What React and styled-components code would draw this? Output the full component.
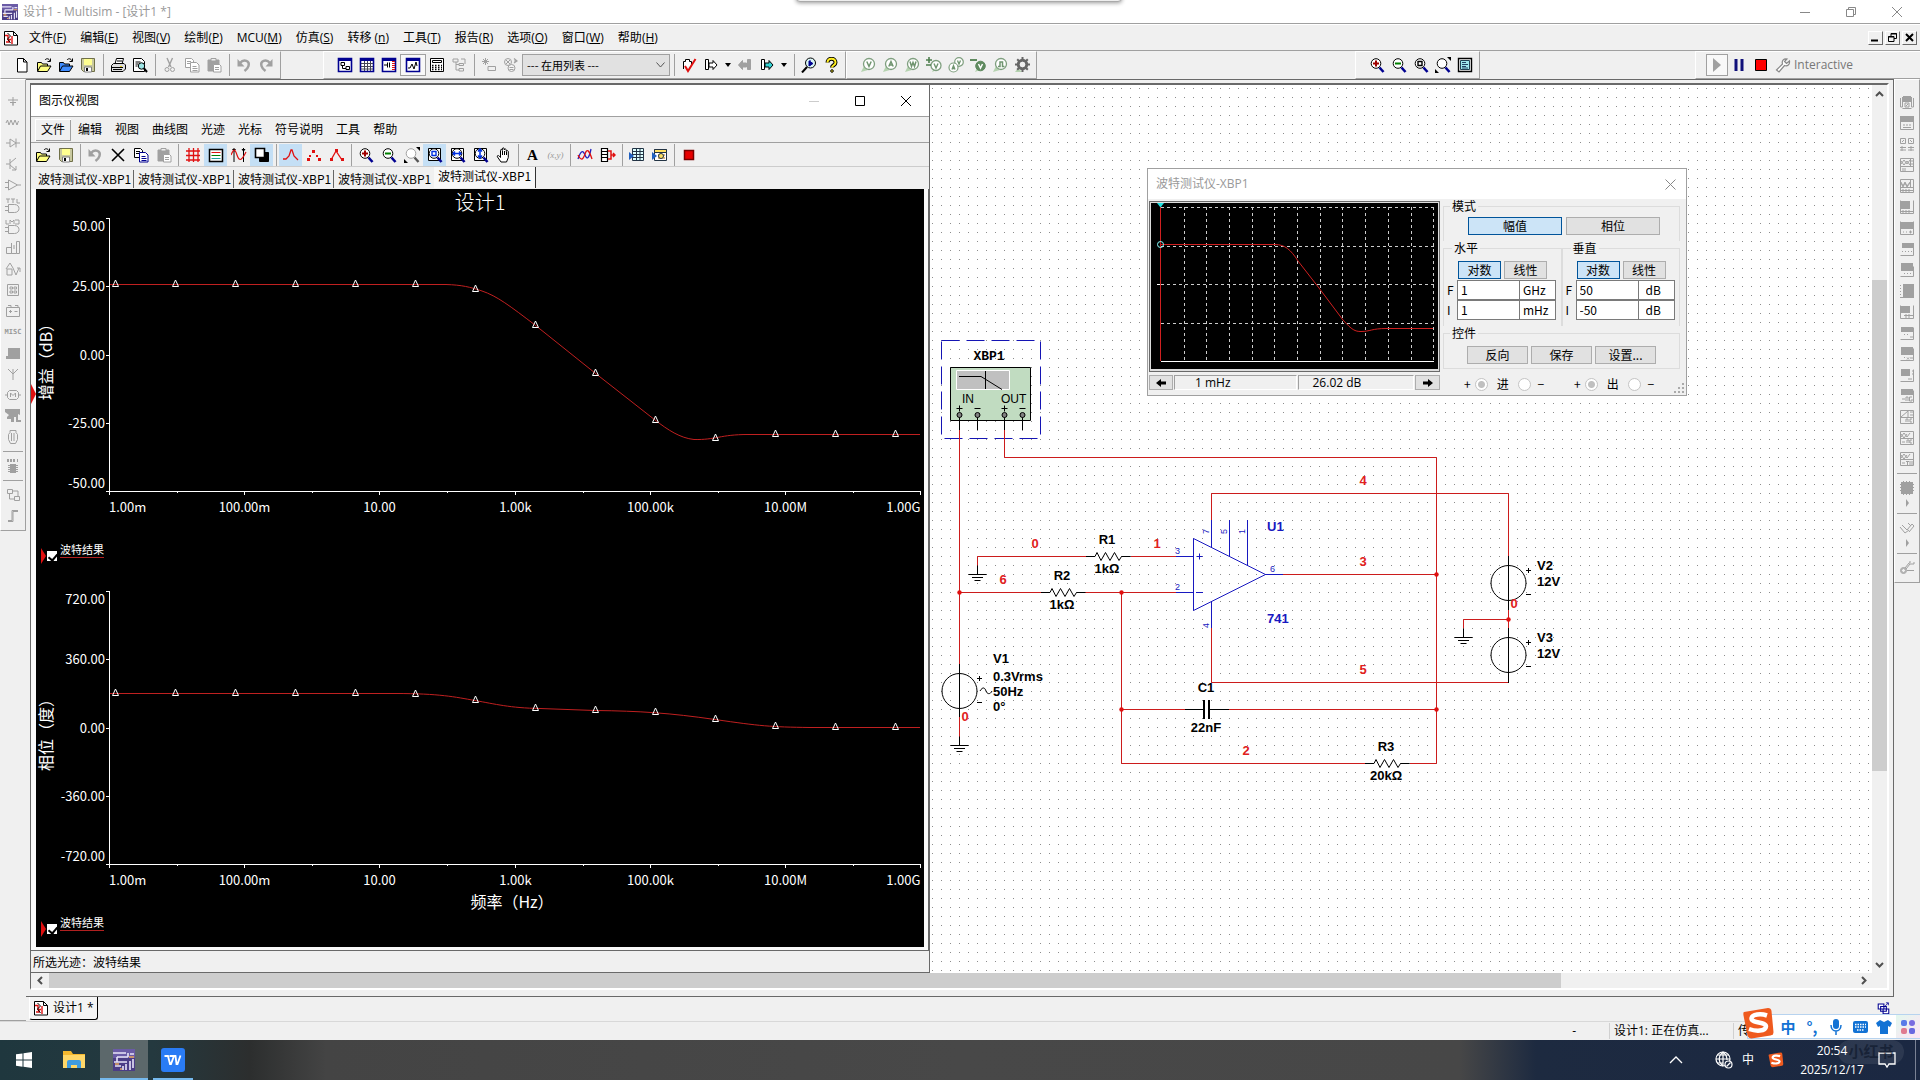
import React from "react";
import styled, { createGlobalStyle } from "styled-components";

const UI = '"Open Sans", "Noto Sans CJK SC", sans-serif';
const NARROW = '"Noto Sans CJK SC", sans-serif';
const FACE = "#f0f0f0";
const EDGE = "#a0a0a0";
const DARK = "#696969";

const Global = createGlobalStyle`
  * { box-sizing: border-box; }
  body { margin: 0; overflow: hidden; background: ${FACE}; font: 12px/16px ${UI}; color: #000; }
  button, input { font: inherit; color: inherit; }
  svg { display: block; flex: none; }
`;

/* ---------- icons: each is a list of [path, stroke, fill, strokeWidth, dash] ---------- */
const K = "#000";
const G = "#a0a0a0";
const R = "#e01010";
const N = "#000090";
const V = "#7f9f7f";
const circle = (x, y, r) => `M${x - r} ${y}a${r} ${r} 0 1 0 ${2 * r} 0a${r} ${r} 0 1 0 ${-2 * r} 0`;

const folder = (fill) => [
  ["M1.5 14V5.500h4l1 1.500h5v2", K, fill],
  ["M1.500 14.500l3-5.500h10.500l-3.500 5.500z", K, fill],
  ["M9 3c1.500-2 4-1.500 5 1M14.500 1.500v3h-3", K],
];
const copyIcon = (a, b) => [
  ["M1.500 1.500h6l2 2v7h-8z M3 4.500h4M3 6.500h4", a, "#fff"],
  ["M6.500 5.500h6l2.500 2.500v7h-8.500z M8.500 9.500h4M8.500 11.500h5M8.500 13.500h5", b, "#fff"],
];
const lens = (extra) => [
  [circle(7, 6.500, 4.800), K, "#fff"],
  ["M10.500 10.500l4 4.500", N, null, 2.600],
  ...extra,
];
const probe = (letter) => [
  ["M1 15l3-6 4 4z", null, "#b5d3b0"],
  [circle(9, 7, 5.500), V, "#fff", 1.300],
  [letter, "#6f946f", null, 1.500],
];
const framed = (extra) => [["M1.500 1.500h13v13h-13z", N, "#fff", 1.600], ["M1 3h14", N, null, 2], ...extra];

const ICONS = {
  fresh: [["M3.500 1.500h6l3.500 3.500v10h-9.500z M9.500 1.500v3.500h3.500", K, "#fff"]],
  open: folder("#ffff80"),
  openBlue: folder("#3f8cff"),
  save: [
    ["M1.500 1.500h13v13h-11l-2-2z", "#707048", "#c9c9a0"],
    ["M4 2h8v6h-8z", null, "#ffff90"],
    ["M4.500 10h7v5h-7z", "#808080", "#fff"],
    ["M6 11h2v3h-2z", null, K],
  ],
  print: [
    ["M5 7l1.500-5.500h7l-1.500 5.500z", K, "#fff"],
    ["M1.500 8.500l2-2h10.500l1.500 1.500v4l-2.500 2.500h-11.500z", K, "#ddd"],
    ["M2 10.500h11M3 12.500h9M7 4h5", K],
    ["M10 9h2v1h-2z", null, "#e8d020"],
  ],
  preview: [
    ["M1.500 1.500h8l3 3v10h-11z M3.500 5h5M3.500 7h3M3.500 9h2", K, "#fff"],
    [circle(9.500, 9, 3.200), K, "#9fe6e6"],
    ["M12 11.500l3 3.500", K, null, 2],
  ],
  cut: [["M5 1l4 9M10.500 1l-4 9", G, null, 1.400], [circle(5, 12.500, 2), G], [circle(10.500, 12.500, 2), G]],
  copyOff: copyIcon(G, G),
  copy: copyIcon(K, N),
  paste: [
    ["M2 3h11v11h-11z", G, G],
    ["M5 1.500h5v2.500h-5z", G, "#eee"],
    ["M7.500 7.500h6l1.500 1.500v6h-7.500z M9 10.500h4M9 12.500h4", G, "#fff"],
  ],
  undo: [["M4 6c4-4.500 10-2 8.500 3c-.5 2-2 3.500-4 5", G, null, 2.500], ["M1.500 2v7.500h7z", null, G]],
  redo: [["M12 6c-4-4.500-10-2-8.500 3c.5 2 2 3.500 4 5", G, null, 2.500], ["M14.500 2v7.500h-7z", null, G]],
  explorer: framed([["M4 5.500h3.500v3h-3.500zM9 9.500h3.500v3h-3.500zM5.500 8.500v3h3.500", K]]),
  sheet: framed([["M2 6.500h12M2 9.500h12M2 12h12M5.500 4v10M8.500 4v10M11.500 4v10", "#445"]]),
  netlist: framed([["M3 8h3M6.500 5.500v5M8.500 5.500v5", K], ["M11 4.500h3M11 6.500h3M11 8.500h3M11 10.500h3M11 12.500h3", R]]),
  grapher: framed([["M3 11h2l2-4 2 5 2-7 1 4", K]]),
  post: [["M1.500 1.500h13v13h-13z M3.500 3.500h9v2h-9z", K, "#fff"], ["M3 8.500h10M3 10.500h10M3 12.500h10", K, null, 1.300, "1.500 1.500"]],
  tree: [["M2 2h5v3h-5zM8 6.500h4.500v2h-4.500zM8 11.500h4.500v2.500h-4.500zM5 5v8h3M5 7.500h3M10 2h4v5", G]],
  comp: [["M4.500 1v7M1 4.500h7M2 2l5 5M7 2l-5 5M7 9.500h7.500v4h-7.500z", G]],
  db: [[circle(5, 5, 3.500), G], ["M3 3l4 4M7 3l-4 4", G], [circle(8.500, 11, 3.500), G, "#f4f4f4"], ["M11 1.500l3 2.500-3 2M14 4h-3M6.500 10.500h4M6.500 12.500h4", G, null, 1.200]],
  erc: [["M2.500 12V4.500h2v-2h4v2h2V8", K, "#fff"], ["M4 9l3 5 7.500-12", R, null, 2]],
  annot: [["M2.500 2.500v10h3v-10z", K, "#fff"], ["M6 6h4v-2.500l4 4.500-4 4.500v-2.500h-4z", K, "#fff"]],
  backOff: [["M13.500 2.500v10h-3v-10z", G, G], ["M9.500 6h-4v-2.500l-4 4.500 4 4.500v-2.500h4z", G, G]],
  fwd: [["M2.500 2.500v10h3v-10z", K, "#fff"], ["M6 6h4v-2.500l4 4.500-4 4.500v-2.500h-4z", K, "#35d0d0"]],
  find: [[circle(9.500, 6, 5), K, "#d8f4f4"], ["M6 10l-5 5.500", K, null, 2], ["M8 4l4 2.500-4 2.500zM9 3v6", N, N]],
  help: [["M4.500 5.500c0-5 8-5 8 0c0 3-3.500 2.500-3.500 5", K, null, 4], ["M4.500 5.500c0-5 8-5 8 0c0 3-3.500 2.500-3.500 5", "#ffee20", null, 2], [circle(9, 14, 1.300), K, "#ffee20"]],
  pv: probe("M6.800 4.500l2.200 5 2.200-5"),
  pa: probe("M6.800 9.500l2.200-5 2.200 5M7.500 8h3"),
  pw: probe("M6 4.500l1.500 5 1.500-4 1.500 4 1.500-5"),
  pdv: [["M6 15l2-4 3 2z", null, "#b5d3b0"], [circle(10, 8.500, 5), V, "#fff", 1.300], ["M8 6.500l2 4.500 2-4.500", "#6f946f", null, 1.400], ["M0 3h6M3 0v6M0 8h5", "#4f7f4f", null, 1.600]],
  pav: [[circle(11, 5, 4.300), V, "#fff", 1.200], [circle(5.500, 10.500, 4.500), V, "#fff", 1.200], ["M4 12.500l1.500-4 1.500 4M4.500 11.500h2M9.500 3.500l1.500 3.500 1.500-3.500", "#6f946f", null, 1.300]],
  pref: [["M5 15l2-4 3 2z", null, "#b5d3b0"], [circle(10.500, 9, 4.800), "#5f8a5f", "#5f8a5f"], ["M8.500 7l2 4 2-4", "#fff", null, 1.500], ["M0 3h7", "#5f8a5f", null, 2]],
  pdig: probe("M6 9.500h2v-4.500h2.500v4.500h2"),
  gear: [["M1 15l3-4 4 4z", null, "#b5d3b0"], [circle(8.500, 7.500, 4.200), "#666", null, 3], ["M8.500 0v3M8.500 12v3M1 7.500h3M13 7.500h3M3.200 2.200l2 2M11.800 10.800l2 2M13.800 2.200l-2 2M3.200 12.800l2-2", "#666", null, 2], [circle(8.500, 7.500, 2.200), "#eee", "#eee"]],
  zin: lens([["M4 6.500h6M7 3.500v6", "#a00000", null, 2]]),
  zout: lens([["M4 6.500h6", "#008000", null, 2]]),
  zarea: lens([["M5 4.500h4v4h-4z", K, null, 1.400]]),
  zfit: lens([["M0 12v4h4zM16 0v4l-4-4z", null, K]]),
  full: [["M1.500 1.500h13v13h-13z", K, "#fff", 1.400], ["M3.500 3.500h9v9h-9z", "#245", "#9fe8ee"], ["M5 5.500h4M5 7.500h6M5 9.500h4M5 11h6", "#246"]],
  play: [["M4 1l8 7-8 7z", null, G]],
  pause: [["M5 2v12M11 2v12", "#10107a", null, 3]],
  stop: [["M2.500 2.500h11v11h-11z", K, "#f00"]],
  stopDark: [["M3.500 3.500h9v9h-9z", "#700", "#e80000", 1.500]],
  wrench: [["M1.500 13l6-6c-1-3 1-5.500 4.500-5l-2.500 2.500 2 2 3-2.500c.5 3.500-2 5.500-5 4.500l-5.500 6.500z", "#888", "#fff", 1.200]],
  cross: [["M2 2l12 12M14 2l-12 12", K, null, 1.600]],
  grid: [["M1 4h14M1 8.500h14M1 13h14M4 1v14M8.500 1v14M13 1v14", R, null, 1.300]],
  legend: [["M1.500 2.500h13v12h-13z", K, "#fff", 1.500], ["M3.500 5.500h9", R], ["M3.500 8.500h9", "#008000"], ["M3.500 11.500h9", "#20a0a0"]],
  cursors: [["M3 1v14M12.500 1v14", K], ["M1 2h4l-2 3zM10.500 2h4l-2 3z", null, K], ["M0 8c3-7 4-6 6 0s4 7 9-3", R, null, 1.200]],
  invert: [["M5.500 5.500h9v9h-9z", K, K], ["M1.500 1.500h9v9h-9z", K, "#fff", 1.600]],
  trace: [["M0 12h3l3-3 2-6h1l2 6 4 4", R, null, 1.300]],
  dots: [["M1 11h3v3h-3zM6 3h3v3h-3zM12 11h3v3h-3zM3 8h2v2h-2zM10 8h2v2h-2z", null, R]],
  dotline: [["M2 13l5-9 6 9", R, null, 1.300], ["M1 11h3v3h-3zM6 2h3v3h-3zM12 11h3v3h-3z", null, R]],
  zrest: [[circle(7, 6.500, 4.800), G, "#fff"], ["M10.500 10.500l4 4.500", "#555", null, 2.400], ["M0 12v4h4zM16 0v4l-4-4z", null, K]],
  zsel: [["M1.500 1.500h12v12h-12z", K, "#fff"], ...lens([["M5 4.500h4v4h-4z", "#0030e0", null, 1.400]])],
  zh: [["M1.500 1.500h12v12h-12z", K, "#fff"], ...lens([["M3 6.500h8M5 4.500l-2 2 2 2M9 4.500l2 2-2 2", "#0030e0", null, 1.500]])],
  zv: [["M1.500 1.500h12v12h-12z", K, "#fff"], ...lens([["M7 2v9M5 4.500l2-2.500 2 2.500M5 8.500l2 2.500 2-2.500", "#0030e0", null, 1.500]])],
  hand: [["M5 15l-3.500-5c-.8-1.500.8-2 1.800-.8l1.200 1.300v-7c0-1.500 1.800-1.500 1.800 0v-1.500c0-1.500 2-1.500 2 0v1c0-1.300 2-1.300 2 .2v1.300c0-1.300 2-1.300 2 .2v5.800l-1.800 4.500z M6.500 4v4M8.500 4v4M10.500 5v3", K, "#fff"]],
  curves: [["M1 12c3-9 5-9 7-4s4 4 6-6", "#2020c0", null, 1.300], ["M1 8c3 6 5 5 7-1s4-4 7 5", R, null, 1.300]],
  exportLog: [["M1.500 1.500h6v13h-6zM1 4.500h7M1 7.500h7M1 10.500h7", K, "#fff", 1.200], ["M8 4h3v8h-3M11 8h4M13 6l2 2-2 2", R, null, 1.500]],
  excel: [["M3.500 1.500h11v12h-11zM3.500 4.500h11M3.500 7.500h11M3.500 10.500h11M7.500 1.500v12M11 1.500v12", "#234", "#dff"], ["M0 5l5 4-5 4z", null, "#2060c0"]],
  measure: [["M2.500 2.500h12v11h-12z", "#234", "#fff"], ["M2.500 2.500h12v3h-12z", "#234", "#ffe060"], ["M6 8h7M6 11h7", "#c07000"], ["M0 5l5 4-5 4z", null, "#2060c0"], [circle(9, 9, 2.500), "#234", "#ffe060"]],
  doc: [["M1.500 1.500h9l4 4v9.500h-13z M10.500 1.500v4h4", K, "#fff"], ["M2 5.500h3v4h3M9 6v8M3 12h3v-3", R, null, 1.400], ["M4.500 3l3 3-3 3 3 4", K]],
  cascade: [["M1.500 2.500h7v6h-7zM4.500 5.500h7v6h-7zM7.500 8.500h7v6h-7z", N, "#fff", 1.300], ["M10 5l4-4M11 1h3v3", N]],
};

const PALETTE = [
  "M8 4v8M3 7h10M5 9.500h6M8 9v4",
  "M1 9l1.500-3 1.500 5 2-5 2 5 2-5 2 5 1.500-4",
  "M1 8h4M11 8h4M5 4v8l6-4zM11 3.500v9",
  "M5 3v10M1 8h4M5 7l6-5M5 9l6 5M11 10v4h-4",
  "M3.500 3v10l9-5zM0 5.500h3.500M0 10.500h3.500M12.500 8h3.500",
  "M1 1h4M3 1v4M6 1h4M8 1v4M12 1v4h3M3.500 6.500h6c6 0 6 8 0 8h-6zM0 8.500h3.500M0 12.500h3.500",
  "M1 1v4h3M5 5v-4l2 2 2-2v4M10 1h4v4h-4M3.500 6.500h6c6 0 6 8 0 8h-6zM0 8.500h3.500M0 12.500h3.500",
  "M1.500 7.500h5v6h-5zM6.500 3v10.500h5v-12h3v12h-3M9 5v4",
  "M1 8l4-6 3 5M2 8h5v6h-5zM8 7l3 7 3-7M12 7h3v4",
  "M2.500 2.500h11v11h-11zM5 5h2.500v2h-2.500zM9 5h2.500v2h-2.500zM5 9h2.500v2h-2.500zM9 9h2.500v2h-2.500z",
  "M1.500 4.500h13v9h-13zM3 2.500h3v2M10 2.500h3v2M4 8.500h3M5.500 7v3M9.500 8.500h3",
  "",
  "F M1 14v-3h2v-8h12v11z",
  "M8 14v-7M8 8l-5-5M8 8l5-5M8 8v-5",
  "M0 8h2.500M13.500 8h2.500M4.500 3.500h7l2 2v5l-2 2h-7l-2-2v-5zM5.500 10v-4l2.500 2.500 2.500-2.500v4",
  "F M0 1h15v6l-2-1v8h-2v-5h-2v5h-3v-3h-4v-2l2-2-4-3zM12 12h4v2h-4z",
  "M5 1.500h6v2l1.500 2v5l-2 4h-5l-2-4v-5l1.500-2zM6.500 4v8M9 4v8",
];
const PALETTE_NAMES = ["Sources", "Basic", "Diodes", "Transistors", "Analog", "TTL", "CMOS", "Digital", "Mixed", "Indicators", "Power", "MISC", "Peripherals", "RF", "Electromechanical", "NI", "Connectors"];

const Glyph = ({ name, size = 16 }) => (
  <svg width={size} height={size} viewBox="0 0 16 16" aria-hidden="true">
    {ICONS[name].map(([d, stroke, fill, w, dash], i) => (
      <path key={i} d={d} stroke={stroke || "none"} fill={fill || "none"} strokeWidth={w || 1} strokeDasharray={dash} />
    ))}
  </svg>
);
const Outline = ({ d }) => {
  const solid = d.startsWith("F ");
  return (
    <svg width="16" height="16" viewBox="0 0 16 16" aria-hidden="true">
      <path d={solid ? d.slice(2) : d} fill={solid ? G : "none"} stroke={solid ? "none" : G} />
    </svg>
  );
};

/* ---------- shell ---------- */
const Shell = styled.div`
  display: flex;
  flex-direction: column;
  min-height: 100vh;
`;
const TitleBar = styled.header`
  display: flex;
  align-items: center;
  height: 24px;
  padding-left: 2px;
  background: #fff;
  border-bottom: 1px solid ${EDGE};
  color: #999;
`;
const AppTitle = styled.h1`
  flex: 1;
  margin: 0 0 0 5px;
  font: inherit;
`;
const CaptionButton = styled.button`
  display: grid;
  place-items: center;
  width: ${(p) => p.$w || 46}px;
  height: ${(p) => p.$h || 20}px;
  padding: 0;
  border: 0;
  background: none;
`;
const Capture = styled.div`
  position: absolute;
  top: -6px;
  left: 50%;
  width: 326px;
  height: 8px;
  margin-left: -164px;
  border: 1px solid #aaa;
  border-radius: 0 0 4px 4px;
  background: #eee;
  box-shadow: 0 1px 4px #0006;
`;
const MenuBar = styled.nav`
  display: flex;
  align-items: center;
  height: 27px;
  padding: 0 3px;
  border-top: 1px solid #fff;
  border-bottom: 1px solid ${EDGE};
`;
const Menus = styled.div`
  display: flex;
  flex: 1;
  margin-left: 3px;
`;
const MenuItem = styled.button`
  padding: 0 7px;
  border: 0;
  background: none;
  white-space: nowrap;
`;
const Spacer = styled.div`
  flex: 1;
`;
const ClassicButton = styled.button`
  display: grid;
  place-items: center;
  width: 15px;
  height: 14px;
  margin-left: 2px;
  padding: 0;
  border: 1px solid;
  border-color: #fff ${DARK} ${DARK} #fff;
  background: ${FACE};
`;
const ToolRow = styled.div`
  display: flex;
  height: 28px;
`;
const ToolGroup = styled.div`
  display: flex;
  align-items: center;
  padding: 0 3px 0 10px;
  margin-left: ${(p) => p.$gap || 0}px;
  border: 1px solid;
  border-color: #fff ${EDGE} ${EDGE} #fff;
`;
const RunGroup = styled(ToolGroup)`
  width: 225px;
  margin-left: 215px;
  border-right: 0;
`;
const Tool = styled.button`
  display: grid;
  place-items: center;
  width: ${(p) => p.$w || 22}px;
  height: 22px;
  padding: 0;
  border: ${(p) => (p.$pressed ? `1px solid ${EDGE}` : "0")};
  background: ${(p) => (p.$on ? "#c4dff5" : p.$pressed ? "#f8f8f8" : "none")};
`;
const Sep = styled.span`
  width: ${(p) => p.$w || 8}px;
  height: 22px;
  background: linear-gradient(${EDGE}, ${EDGE}) center / 1px 100% no-repeat;
`;
const Drop = styled.button`
  width: 12px;
  height: 22px;
  padding: 0;
  border: 0;
  background: none;
  &::after {
    content: "";
    display: block;
    margin: auto;
    width: 0;
    border: 3px solid transparent;
    border-top: 4px solid #000;
    border-bottom: 0;
  }
`;
const InUse = styled.select`
  appearance: none;
  width: 148px;
  height: 22px;
  padding: 0 4px;
  border: 1px solid ${EDGE};
  border-radius: 0;
  font: 11px/16px ${NARROW};
  color: #000;
  background: #e1e1e1;
`;
const Picker = styled.label`
  display: grid;
  align-items: center;
  > * { grid-area: 1 / 1; }
  > svg { justify-self: end; margin-right: 5px; pointer-events: none; }
`;
const Mode = styled.span`
  color: #777;
`;

/* ---------- work area ---------- */
const Work = styled.main`
  flex: 1;
  display: flex;
  min-height: 0;
`;
const Side = styled.aside`
  width: 26px;
  flex: none;
  border-bottom: 1px solid ${EDGE};
`;
const Palette = styled.div`
  display: flex;
  flex-direction: column;
  align-items: center;
  padding: ${(p) => p.$top}px 0 4px;
  border: 1px solid;
  border-color: #fff ${EDGE} ${EDGE} #fff;
`;
const PaletteButton = styled.button`
  display: grid;
  place-items: center;
  width: 24px;
  height: 21px;
  padding: 0;
  border: 0;
  background: none;
  font: bold 7px/16px "DejaVu Sans Mono", monospace;
  color: #999;
`;
const PaletteSep = styled.span`
  width: 20px;
  height: 1px;
  margin: 4px 0 3px;
  background: ${EDGE};
`;
const PaletteArrow = styled.span`
  height: 8px;
  margin: 1px 0 2px;
  border: solid transparent;
  border-width: 4px 0 4px 3px;
  border-left-color: ${EDGE};
`;
const Center = styled.div`
  flex: 1;
  min-width: 0;
  display: flex;
  flex-direction: column;
`;
const Mdi = styled.section`
  flex: 1;
  display: flex;
  padding: 3px 4px 6px;
  border: 1px solid ${DARK};
  border-left: 0;
`;
const Frame = styled.div`
  flex: 1;
  min-width: 0;
  display: grid;
  grid-template: minmax(0, 1fr) 15px / minmax(0, 1fr) 15px;
  border: 2px solid;
  border-color: ${DARK} #fff #fff ${DARK};
  border-left-width: 1px;
`;
const Canvas = styled.div`
  position: relative;
  overflow: hidden;
  background: #fff;
`;
const Bar = styled.div`
  display: flex;
  flex-direction: ${(p) => (p.$v ? "column" : "row")};
  background: #f0f0f0;
`;
const Arrow = styled.button`
  display: grid;
  place-items: center;
  width: ${(p) => (p.$v ? 15 : 18)}px;
  height: ${(p) => (p.$v ? 18 : 15)}px;
  padding: 0;
  border: 0;
  background: none;
`;
const Thumb = styled.div`
  flex: ${(p) => p.$size} 0 0;
  background: ${(p) => (p.$solid ? "#cdcdcd" : "none")};
`;
const DocTabs = styled.div`
  display: flex;
  align-items: flex-start;
  height: 24px;
  padding-left: 3px;
`;
const DocTab = styled.button`
  display: flex;
  align-items: center;
  gap: 4px;
  height: 23px;
  padding: 0 3px;
  border: 1px solid #000;
  border-top: 0;
  border-left-color: #fff;
  border-radius: 0 0 3px 3px;
  background: #f4f4f4;
`;
const Status = styled.footer`
  display: flex;
  align-items: center;
  height: 19px;
  border-top: 1px solid #d8d8d8;
`;
const StatusCell = styled.span`
  width: ${(p) => p.$w}px;
  padding: 0 4px;
  border-left: 1px solid #d0d0d0;
`;
const Dash = styled.span`
  margin: 0 33px 0 auto;
`;

/* ---------- grapher window ---------- */
const GraphWindow = styled.section`
  position: absolute;
  top: 0;
  left: 0;
  display: flex;
  flex-direction: column;
  width: 899px;
  border: 1px solid ${DARK};
  border-width: 0 1px 1px 0;
  background: ${FACE};
`;
const WindowTitle = styled.div`
  display: flex;
  align-items: center;
  height: ${(p) => p.$h}px;
  padding-left: 8px;
  background: #fff;
  color: ${(p) => (p.$dim ? "#999" : "#000")};
  > h2 { flex: 1; margin: 0; font: inherit; }
`;
const GraphMenu = styled.nav`
  display: flex;
  align-items: center;
  gap: 1px;
  height: 27px;
  padding-left: 4px;
  border-top: 1px solid ${EDGE};
  border-bottom: 1px solid ${EDGE};
`;
const GraphItem = styled.button`
  height: 22px;
  padding: 0 6px;
  border: 0;
  background: none;
  box-shadow: ${(p) => (p.$hot ? `inset 1px 1px #fff, inset -1px -1px ${EDGE}` : "none")};
`;
const GraphTools = styled.div`
  display: flex;
  align-items: center;
  height: 24px;
  border-bottom: 1px solid #ccc;
`;
const TabStrip = styled.div`
  display: flex;
  align-items: flex-end;
  height: 22px;
  padding: 0 0 1px 3px;
`;
const Tab = styled.button`
  width: ${(p) => (p.$on ? 102 : 100)}px;
  height: ${(p) => (p.$on ? 21 : 18)}px;
  padding: 0 0 ${(p) => (p.$on ? 3 : 0)}px 4px;
  border: 0;
  border-right: ${(p) => (p.$last ? "0" : `1px solid ${p.$on ? "#333" : "#666"}`)};
  background: ${(p) => (p.$on ? "#f8f8f8" : "none")};
  font: 12px/16px ${NARROW};
  text-align: left;
  white-space: nowrap;
`;
const PaneFrame = styled.div`
  position: relative;
  padding: 0 4px 3px 5px;
  border-right: 1px solid ${DARK};
  border-bottom: 1px solid ${DARK};
  background: #fafafa;
`;
const Pane = styled.div`
  height: 758px;
  background: #000;
  color: #fff;
`;
const PlotTitle = styled.h3`
  height: 26px;
  margin: 0;
  font: 300 20px/26px ${NARROW};
  text-align: center;
`;
const PlotArea = styled.svg`
  overflow: visible;
`;
const Legend = styled.div`
  display: flex;
  align-items: flex-start;
  height: ${(p) => p.$h}px;
  padding: 6px 0 0 5px;
`;
const LegendLabel = styled.label`
  margin-left: 3px;
  padding-bottom: 1px;
  border-bottom: 1px solid #b02020;
  font: 11px/14px ${NARROW};
`;
const Tick = styled.input`
  appearance: none;
  width: 10px;
  height: 10px;
  margin: 9px 0 0 1px;
  background: #fff;
  position: relative;
  &:checked::after {
    content: "";
    position: absolute;
    left: 3px;
    top: 1px;
    width: 4px;
    height: 7px;
    border: solid #000;
    border-width: 0 2px 2px 0;
    transform: rotate(40deg);
  }
`;
const LegendMark = styled.svg`
  margin-top: 6px;
`;
const PlotPointer = styled.svg`
  position: absolute;
  left: 0;
  top: 195px;
`;
const GraphStatus = styled.div`
  height: 21px;
  padding: 4px 2px 0;
`;

const plotText = { fill: "#fff", fontFamily: NARROW, fontSize: 13 };
const axisText = { ...plotText, fontSize: 16, textAnchor: "middle" };
const X_LABELS = ["1.00m", "100.00m", "10.00", "1.00k", "100.00k", "10.00M", "1.00G"];
const MARKS = Array.from({ length: 14 }, (_, i) => 115 + 60 * i);

function Plot({ title, axis, labels, curve, marks }) {
  return (
    <PlotArea width="888" height="321" viewBox="36 215 888 321" role="img" aria-label={title}>
      <path d="M109.500 218v277M106 491.500h815" stroke="#fff" fill="none" />
      {labels.map((t, i) => {
        const y = [218, 286, 355, 423, 491][i];
        const ty = [226, 286, 355, 423, 483][i];
        return (
          <g key={t}>
            <path d={`M106 ${y + 0.5}h3`} stroke="#fff" />
            <text {...plotText} x="105" y={ty + 5} textAnchor="end">{t}</text>
          </g>
        );
      })}
      {X_LABELS.map((t, i) => {
        const x = Math.round(109 + 135.200 * i) + 0.5;
        return (
          <g key={t}>
            <path d={`M${x} 492v3${i < 6 ? `M${x + 68} 492v1` : ""}`} stroke="#fff" />
            <text {...plotText} x={i === 0 ? 109 : x} y="512" textAnchor={i === 0 ? "start" : i === 6 ? "end" : "middle"}>{t}</text>
          </g>
        );
      })}
      <text {...axisText} transform="translate(52 358) rotate(-90)">{title}</text>
      {axis && <text {...axisText} x="512" y="535">{axis}</text>}
      <path d={curve} stroke="#c02020" fill="none" />
      {marks.map((y, i) => (
        <path key={i} d={`M${MARKS[i] + 0.5} ${y - 4}l3 6.500h-6z`} stroke="#fff" fill="none" />
      ))}
    </PlotArea>
  );
}

const LegendRow = ({ id, height }) => (
  <Legend $h={height}>
    <LegendMark width="5" height="16" viewBox="0 0 5 16" aria-hidden="true"><path d="M0 0l5 8-5 8z" fill="#e01010" /></LegendMark>
    <Tick type="checkbox" id={id} defaultChecked />
    <LegendLabel htmlFor={id}>波特结果</LegendLabel>
  </Legend>
);

const GTOOLS = ["open", "save", "|", "undo", "cross", "copy", "paste", "|", "grid", "*legend", "cursors", "*invert", "|", "*trace", "dots", "dotline", "|", "zin", "zout", "zrest", "*zsel", "zh", "zv", "hand", "|", "A", "(x,y)", "|", "curves", "exportLog", "|", "excel", "measure", "|", "stopDark"];
const LetterA = styled.span`
  font: bold 15px/16px "Liberation Serif", serif;
`;
const LetterXY = styled.span`
  font: italic 9px/16px "Liberation Serif", serif;
  color: #999;
`;

function Grapher() {
  return (
    <GraphWindow aria-label="图示仪视图">
      <WindowTitle $h={31}>
        <h2>图示仪视图</h2>
        <CaptionButton $h={31} aria-label="最小化"><svg width="10" height="10"><path d="M0 5.500h10" stroke="#ccc" /></svg></CaptionButton>
        <CaptionButton $h={31} aria-label="最大化"><svg width="10" height="10"><path d="M.5.5h9v9h-9z" stroke="#000" fill="none" /></svg></CaptionButton>
        <CaptionButton $h={31} aria-label="关闭"><svg width="10" height="10"><path d="M0 0l10 10M10 0L0 10" stroke="#000" /></svg></CaptionButton>
      </WindowTitle>
      <GraphMenu>
        {["文件", "编辑", "视图", "曲线图", "光迹", "光标", "符号说明", "工具", "帮助"].map((m, i) => (
          <GraphItem key={m} $hot={i === 0}>{m}</GraphItem>
        ))}
      </GraphMenu>
      <GraphTools>
        {GTOOLS.map((t, i) => {
          if (t === "|") return <Sep key={i} $w={6} />;
          const on = t[0] === "*";
          const name = on ? t.slice(1) : t;
          return (
            <Tool key={i} $w={23} $on={on} aria-label={name}>
              {name === "A" ? <LetterA>A</LetterA> : name === "(x,y)" ? <LetterXY>(x,y)</LetterXY> : <Glyph name={name} />}
            </Tool>
          );
        })}
      </GraphTools>
      <TabStrip>
        {[0, 1, 2, 3, 4].map((i) => (
          <Tab key={i} $on={i === 4} $last={i === 3}>波特测试仪-XBP1</Tab>
        ))}
      </TabStrip>
      <PaneFrame>
        <Pane>
          <PlotTitle>设计1</PlotTitle>
          <Plot
            title="增益（dB）"
            labels={["50.00", "25.00", "0.00", "-25.00", "-50.00"]}
            marks={[284, 284, 284, 284, 284, 284, 289, 325, 373, 420, 438, 434, 434, 434]}
            curve="M110 284.500H446C462 285 470 287 482 291C497 296 510 306 535 325L595 373L655 420C668 430 680 438 694 439.500C716 440 720 434.500 748 434.500H920"
          />
          <LegendRow id="trace-gain" height={52} />
          <Plot
            title="相位（度）"
            axis="频率（Hz）"
            labels={["720.00", "360.00", "0.00", "-360.00", "-720.00"]}
            marks={[320, 320, 320, 320, 320, 321, 327, 335, 337, 339, 346, 353, 354, 354]}
            curve="M110 320.500H395C440 320.500 455 324 475 327.500S510 335 540 335.500L595 337.500C640 338 670 340 715 346.500S770 354 810 354.500H920"
          />
          <LegendRow id="trace-phase" height={38} />
        </Pane>
        <PlotPointer width="5" height="20" viewBox="0 0 5 20" aria-hidden="true"><path d="M0 0l5 10-5 10z" fill="#e01010" /></PlotPointer>
      </PaneFrame>
      <GraphStatus>所选光迹：波特结果</GraphStatus>
    </GraphWindow>
  );
}

/* ---------- schematic ---------- */
const zig = (x, y) => `M${x - 9} ${y}h9l2 -4l4 8l4.500 -8l4.500 8l4.500 -8l4.500 8l2.500 -4h9`;
const ground = (x, y) => `M${x} ${y - 9}v9M${x - 9} ${y}h18M${x - 5.500} ${y + 3}h11M${x - 3} ${y + 6}h6`;
const LABELS = [
  [1107, 544, "R1"], [1107, 573, "1kΩ"], [1062, 580, "R2"], [1062, 609, "1kΩ"], [1386, 751, "R3"], [1386, 780, "20kΩ"],
  [1206, 692, "C1"], [1206, 732, "22nF"],
];
const LEFT_LABELS = [
  [993, 663, "V1"], [993, 681, "0.3Vrms"], [993, 696, "50Hz"], [993, 711, "0°"],
  [1537, 570, "V2"], [1537, 586, "12V"], [1537, 642, "V3"], [1537, 658, "12V"],
];
const NETS = [[1035, 548, 0], [1157, 548, 1], [1003, 584, 6], [965, 721, 0], [1514, 608, 0], [1363, 485, 4], [1363, 566, 3], [1363, 674, 5], [1246, 755, 2]];

function Schematic() {
  return (
    <svg width="1841" height="888" viewBox="31 85 1841 888" role="img" aria-label="设计1">
      <defs>
        <pattern id="dots" x="5" y="7" width="9" height="9" patternUnits="userSpaceOnUse">
          <rect width="1" height="1" fill="#8c8c8c" />
        </pattern>
      </defs>
      <rect x="31" y="85" width="1841" height="888" fill="url(#dots)" />
      <path d="M941.500 340.500h99v98h-99z" fill="none" stroke="#1414b4" strokeDasharray="18 7" />
      <path d="M950.500 367.500h80v53h-80z" fill="#c1dcc1" stroke="#000" />
      <path d="M956.500 370.500h53v19h-53z" fill="#c0c0c0" stroke="#fff" />
      <g fill="none" stroke="#000">
        <path d="M959 376.500h22l21 13M985.500 371v18" />
        <path d="M956.500 408.500h6M959.500 405.500v6M974.500 408.500h6M1001.500 408.500h6M1004.500 405.500v6M1019.500 408.500h6" />
        <path d="M959.500 415v15M977.500 415v15M1004.500 415v15M1022.500 415v15" />
        {[959.500, 977.500, 1004.500, 1022.500].map((x) => <circle key={x} cx={x} cy="415" r="2.500" fill="#808080" />)}
      </g>
      <g fill="none" stroke="#cc1c1c">
        <path d="M959.500 430V664M959.500 716v21M1004.500 430v27.500h432v306H1410M1365 763.500H1121.500V592.500" />
        <path d="M977.500 566v-9.500H1086M1131 556.500h46M959.500 592.500H1041M1085 592.500h91" />
        <path d="M1121.500 709.500H1185M1229 709.500h207.500M1211.500 628v54.500h297M1211.500 520v-26.500h297v63M1283 574.500h153.500" />
        <path d="M1508.500 610v18M1508.500 619.500h-45v9" />
      </g>
      <g fill="none" stroke="#000">
        <path d={zig(1095, 556.500)} />
        <path d={zig(1050, 592.500)} />
        <path d={zig(1374, 763.500)} />
        <path d={ground(977.500, 574.500)} />
        <path d={ground(959.500, 745.500)} />
        <path d={ground(1463.500, 637.500)} />
        <path d="M1185 709.500h18M1209 709.500h20" />
        <path d="M1204 700v19M1209 700v19" strokeWidth="2" />
        <circle cx="959.500" cy="691" r="17.500" />
        <circle cx="1508.500" cy="583" r="17.500" />
        <circle cx="1508.500" cy="655" r="17.500" />
        <path d="M959.500 664v53M1508.500 556v54M1508.500 628v55" />
        <path d="M980 691c3-5 5-3 6 0s4 4 6 0" />
        <path d="M977 678.500h5M979.500 676v5M977 702.500h5M1526 570.500h5M1528.500 568v5M1526 594.500h5M1526 642.500h5M1528.500 640v5M1526 666.500h5" />
      </g>
      <g fill="none" stroke="#1818c0">
        <path d="M1193.500 538.500v72l72-36z M1176 556.500h17M1176 592.500h17M1265 574.500h18" />
        <path d="M1211.500 520v27M1229.500 520v36M1247.500 520v45M1211.500 602v26M1196.500 556.500h6M1199.500 553.500v6M1196 592.500h7" />
      </g>
      {[[959.500, 592.500], [1121.500, 592.500], [1121.500, 709.500], [1436.500, 574.500], [1436.500, 709.500], [1508.500, 619.500]].map(([x, y]) => (
        <circle key={`${x}-${y}`} cx={x} cy={y} r="2.200" fill="#e01010" />
      ))}
      <g fontFamily='"Liberation Sans", sans-serif' fontSize="13" fontWeight="bold">
        {LABELS.map(([x, y, t]) => <text key={`${x}${y}`} x={x} y={y} textAnchor="middle">{t}</text>)}
        {LEFT_LABELS.map(([x, y, t]) => <text key={`${x}${y}`} x={x} y={y}>{t}</text>)}
        <g fill="#e02020">{NETS.map(([x, y, t]) => <text key={`${x}${y}`} x={x} y={y} textAnchor="middle">{t}</text>)}</g>
        <g fill="#1818c0"><text x="1267" y="531">U1</text><text x="1267" y="623">741</text></g>
      </g>
      <g fontFamily='"Liberation Sans", sans-serif' fontSize="9" fill="#1818c0">
        <text x="1175" y="554">3</text><text x="1175" y="590">2</text><text x="1270" y="572">6</text>
        {[[1209, 534, 7], [1227, 534, 5], [1245, 534, 1], [1209, 628, 4]].map(([x, y, t]) => (
          <text key={t} transform={`translate(${x} ${y}) rotate(-90)`}>{t}</text>
        ))}
      </g>
      <g fontFamily='"Liberation Sans", sans-serif' fontSize="12"><text x="962" y="403">IN</text><text x="1001" y="403">OUT</text></g>
      <text x="989" y="360" textAnchor="middle" fontFamily='"Liberation Mono", monospace' fontSize="13" fontWeight="bold">XBP1</text>
    </svg>
  );
}

/* ---------- bode instrument ---------- */
const Bode = styled.section`
  position: absolute;
  top: 83px;
  left: 1116px;
  width: 540px;
  border: 1px solid ${EDGE};
  background: ${FACE};
`;
const BodeBody = styled.div`
  display: flex;
  gap: 3px;
  padding: 0 6px 4px 1px;
`;
const Scope = styled.div`
  width: 291px;
  padding-top: 2px;
`;
const Screen = styled.div`
  padding: 1px 1px 2px;
  border: 1px solid ${DARK};
  background: #ddd;
`;
const Readout = styled.div`
  display: flex;
  gap: 1px;
  margin-top: 3px;
`;
const Field = styled.output`
  flex: 1;
  height: 15px;
  padding-left: ${(p) => p.$pad}px;
  border: 1px solid;
  border-color: ${EDGE} #fff #fff ${EDGE};
  line-height: 14px;
`;
const Push = styled.button`
  display: grid;
  place-items: center;
  width: ${(p) => p.$w}px;
  height: ${(p) => p.$h || 18}px;
  padding: 0;
  border: 1px solid ${(p) => (p.$on ? "#00549a" : "#adadad")};
  background: ${(p) => (p.$on ? "#cce4f7" : "#e1e1e1")};
  font: 12px/14px ${NARROW};
`;
const Controls = styled.div`
  width: 237px;
`;
const Group = styled.fieldset`
  min-width: 0;
  margin: 0;
  padding: ${(p) => p.$pad || "6px 0 6px 14px"};
  border: 1px solid #dcdcdc;
  border-bottom-width: ${(p) => (p.$end ? 1 : 0)}px;
  > legend {
    margin-left: ${(p) => p.$shift || 0}px;
    padding: 0 2px;
    font: 12px/14px ${NARROW};
  }
`;
const Pair = styled.div`
  display: flex;
  gap: ${(p) => p.$gap || 3}px;
`;
const Halves = styled.div`
  display: grid;
  grid-template-columns: 1fr 1fr;
`;
const AxisRows = styled.div`
  margin: 1px 0 0 -11px;
`;
const Range = styled.label`
  display: flex;
  align-items: center;
  height: 20px;
  font-family: ${NARROW};
  > span { width: 10px; }
`;
const Entry = styled.input`
  width: ${(p) => p.$w}px;
  height: 20px;
  padding: 0 3px 2px;
  border: 1px solid #7a7a7a;
  border-radius: 0;
  background: #fff;
  &:last-child { padding-left: ${(p) => p.$pad || 3}px; border-left: 0; }
`;
const Ports = styled.div`
  display: flex;
  gap: 30px;
  padding: 8px 0 0 21px;
`;
const Port = styled.div`
  display: flex;
  align-items: center;
  gap: 9px;
  font: 12px/14px ${NARROW};
  > label { display: flex; align-items: center; gap: 4px; }
`;
const Dot = styled.input`
  appearance: none;
  width: 13px;
  height: 13px;
  margin: 0;
  border: 1px solid #c4c4c4;
  border-radius: 50%;
  background: #fff;
  &:checked { background: radial-gradient(#c0c0c0 0 3px, #fff 4px); }
`;
const Grip = styled.svg`
  position: absolute;
  right: 1px;
  bottom: 0;
`;

const Axis = ({ name, end, start, units, pad }) => (
  <Group $shift={-6}>
    <legend>{name}</legend>
    <Pair><Push $w={43} $on>对数</Push><Push $w={43}>线性</Push></Pair>
    <AxisRows>
      {[["F", end], ["I", start]].map(([k, v], i) => (
        <Range key={k}>
          <span>{k}</span>
          <Entry $w={63} defaultValue={v} />
          <Entry $w={36} $pad={pad} defaultValue={units[i]} aria-label={`${name} ${k}`} />
        </Range>
      ))}
    </AxisRows>
  </Group>
);

function BodePlotter() {
  const cols = Array.from({ length: 12 }, (_, i) => `M${Math.round(1183.500 + 22.700 * i) + 0.5} 207V361`).join("");
  return (
    <Bode aria-label="波特测试仪-XBP1">
      <WindowTitle $h={30} $dim>
        <h2>波特测试仪-XBP1</h2>
        <CaptionButton $w={31} $h={28} aria-label="关闭"><svg width="11" height="11"><path d="M.5.500l10 10M10.500.5l-10 10" stroke="#888" /></svg></CaptionButton>
      </WindowTitle>
      <BodeBody>
        <Scope>
          <Screen>
            <svg width="287" height="166" viewBox="1151 203 287 166" role="img" aria-label="1 mHz, 26.02 dB">
              <rect x="1151" y="203" width="287" height="166" fill="#000" />
              <path d={`M1161 207.500h273M1161 246.500h273M1161 284.500h273M1161 323.500h273${cols}`} stroke="#ccc" strokeDasharray="3 3" fill="none" />
              <path d="M1161 361.500h273M1157 284.500h3" stroke="#fff" />
              <path d="M1160.500 207v154M1161 244.500h114C1285 244.500 1291 250 1298 261L1319 288L1343 320C1352 330 1355 331.500 1361 331.500C1370 331.500 1372 328.500 1386 328.500h47" stroke="#d02020" fill="none" />
              <path d="M1157 203h7l-3.500 4.500z" fill="#20e0e0" />
              <circle cx="1160.500" cy="244.500" r="3" stroke="#8ff" fill="none" />
            </svg>
          </Screen>
          <Readout>
            <Push $w={24} $h={15} aria-label="左移"><svg width="10" height="8"><path d="M0 4l5-4v2.500h5v3h-5v2.500z" /></svg></Push>
            <Field $pad={20}>1 mHz</Field>
            <Field $pad={14}>26.02 dB</Field>
            <Push $w={25} $h={15} aria-label="右移"><svg width="10" height="8"><path d="M10 4l-5-4v2.500h-5v3h5v2.500z" /></svg></Push>
          </Readout>
        </Scope>
        <Controls>
          <Group $pad="4px 0 6px 24px" $shift={-18}>
            <legend>模式</legend>
            <Pair $gap={4}><Push $w={94} $on>幅值</Push><Push $w={94}>相位</Push></Pair>
          </Group>
          <Halves>
            <Axis name="水平" end="1" start="1" units={["GHz", "mHz"]} />
            <Axis name="垂直" end="50" start="-50" units={["dB", "dB"]} pad={7} />
          </Halves>
          <Group $pad="6px 0 4px 23px" $shift={-17} $end>
            <legend>控件</legend>
            <Pair><Push $w={61}>反向</Push><Push $w={61}>保存</Push><Push $w={61}>设置...</Push></Pair>
          </Group>
          <Ports>
            {["进", "出"].map((p) => (
              <Port key={p} role="group" aria-label={p}>
                <label>+<Dot type="radio" name={p} defaultChecked /></label>
                <span>{p}</span>
                <label><Dot type="radio" name={p} />&nbsp;−</label>
              </Port>
            ))}
          </Ports>
        </Controls>
      </BodeBody>
      <Grip width="12" height="12" aria-hidden="true"><path d="M9 1h2M5 5h2M9 5h2M1 9h2M5 9h2M9 9h2" stroke="#aaa" strokeWidth="2" /></Grip>
    </Bode>
  );
}

/* ---------- taskbar ---------- */
const Taskbar = styled.footer`
  display: flex;
  align-items: stretch;
  height: 40px;
  background: linear-gradient(90deg, #1f373e 0, #24393f 8%, #2c2e2e 13%, #444 17%, #484848 50%, #474747 76%, #1d2a40 80%, #1b2842 100%);
  color: #fff;
`;
const Task = styled.button`
  display: grid;
  place-items: center;
  width: ${(p) => p.$w || 48}px;
  margin-left: ${(p) => p.$gap || 0}px;
  padding: 0;
  border: 0;
  background: ${(p) => (p.$on ? "#5c686b" : "none")};
  box-shadow: ${(p) => (p.$run ? "inset 0 -2px #76b9ed" : "none")};
`;
const Tray = styled.div`
  display: flex;
  align-items: center;
  margin-left: auto;
`;
const TrayItem = styled.button`
  display: grid;
  place-items: center;
  width: ${(p) => p.$w}px;
  height: 40px;
  padding: 0;
  border: 0;
  background: none;
  color: #fff;
`;
const Clock = styled.time`
  width: 78px;
  margin-left: 3px;
  font: 12px/19px ${UI};
  text-align: center;
`;
const Peek = styled.span`
  width: 5px;
  height: 40px;
  margin-left: 12px;
  border-left: 1px solid #7a8294;
`;
const Watermark = styled.span`
  position: absolute;
  right: 16px;
  bottom: 16px;
  width: 66px;
  height: 24px;
  border-radius: 12px;
  background: #ffffff14;
  color: #0b142699;
  font: bold 15px/22px ${NARROW};
  text-align: center;
  pointer-events: none;
`;
const Ime = styled.div`
  position: absolute;
  right: 0;
  bottom: 41px;
  display: flex;
  align-items: center;
  height: 25px;
  padding-left: 28px;
  border: 1px solid #b7d3ef;
  border-right: 0;
  background: #fff;
  color: #1272d4;
`;
const ImeKey = styled.button`
  display: grid;
  place-items: center;
  width: 24px;
  height: 23px;
  padding: 0;
  border: 0;
  background: ${(p) => (p.$soft ? "linear-gradient(135deg,#e2f8ee,#ffe3f4)" : "none")};
  font: bold 15px/20px ${NARROW};
`;
const ImeLogo = styled.svg`
  position: absolute;
  left: -6px;
  bottom: -2px;
`;

const SLogo = () => (
  <>
    <path d="M2 5l24-4q3 0 3.500 3l2 21q0 3-3 3.500l-19 3q-3 0-4-3l-4-20q-.5-3 .5-3.500z" fill="#ef5a1e" />
    <path d="M25 8.500c-6-2-15-1.500-15.500 3c0 5 14.500 3 14.500 8c-.5 5-10 5-17 2.500" stroke="#fff" strokeWidth="4.500" fill="none" />
  </>
);
const AppMark = ({ size }) => (
  <svg width={size} height={size} viewBox="0 0 22 22" aria-hidden="true">
    <rect width="22" height="22" fill="#4b3d86" />
    <rect width="22" height="9" fill="#6a5ba6" />
    <path d="M0 4h13M4 8h11M4 8v5M1 13h13M2 17h6M15 4v4M17 5h4M10 17v4M13 15v6M17 12v9M20 10v9" stroke="#e8e4f8" strokeWidth="1.600" fill="none" />
    <path d="M16 8h5M2 15h4M7 20h2" stroke="#e8a85c" strokeWidth="1.500" />
  </svg>
);

const MENUS = [["文件", "F"], ["编辑", "E"], ["视图", "V"], ["绘制", "P"], ["MCU", "M"], ["仿真", "S"], ["转移 ", "n"], ["工具", "T"], ["报告", "R"], ["选项", "O"], ["窗口", "W"], ["帮助", "H"]];
const tools = (names) => names.map((n, i) => (n === "|" ? <Sep key={i} /> : <Tool key={i} aria-label={n}><Glyph name={n} /></Tool>));

/* instruments: "S solid | line" or a line drawing alone */
const INSTRUMENTS = [
  "S M4 2h8v6h-8z|M1.500 4v9h2v-10M14.500 4v9h-2v-10M3.500 14.500h9M6 9h4v4h-4zM7 12l2-2",
  "S M1 1h14v6h-14z|M1.500 1.500v13h13v-13M4 10h2M7 10h2M10 10h2M4 12.500h8",
  "M1.500 2.500h5v5h-5zM9.500 2.500h5v5h-5zM3 6l2-2M11 4l2 2M1 11.500h6M1 14h6M9 11.500h6M9 14h6M3 10v5M12 10v5",
  "M1.500 1.500h13v13h-13zM1 9.500h14M11.500 2v8M2 7l3-4 3 4 3-4M2 4l3 4 3-4 3 4M4 11v3M6 11v3M12 4h3M12 7h3",
  "M1.500 1.500h13v13h-13zM1 9.500h14M11.500 2v8M2 4l2 4 2-4 2 4 3-4M2 5l2 4 2-4 2 4 3-4M2 12.500h12M4 11v3M7 11v3M10 11v3",
  "S M2 2h9v8h-9z|M1.500 1.500v13h13v-13M2 12.500h12M4 11v3M7 11v3M10 11v3",
  "S M2 2h12v7h-12z|M1.500 1.500v13h13v-13M4 12h1M7 12h1M10 12h3M11.500 10.500v3",
  "S M3 2h12v5h-12z|M1.500 14.500h13v-10M3 10.500h1M6 10.500h1M9 10.500h1M12 10.500h1",
  "S M2 1h12v8h-12z|M1.500 14.500h13v-10M5 11.500h1M8 11.500h1M11 11.500h1",
  "S M4 1h11v13h-11z|M1.500 2v1M1.500 5v1M1.500 8v1M1.500 11v1M1 14.500h14",
  "S M2 2h9v7h-9z|M1.500 1.500v13h13v-13M5 11.500h9M7 10v4M10 10v4",
  "S M2 2h12v5h-12z|M1.500 14.500h13v-12M5 9.500h1M8 9.500h1M11 12h3",
  "S M2 1h12v8h-12z|M1.500 14.500h13v-12M5 11.500h1M8 11.500l2 2M10 11.500l-2 2M11 12h3",
  "S M2 2h9v7h-9z|M1.500 14.500h13v-12M13 4h1M13 7h1M9 12h4",
  "S M2 1h12v6h-12z|M1.500 14.500h13v-12M3 11h3M7 13v-4h2v4M13 9h-2.500v4h2.500v-2",
  "M1.500 14.500v-13h13v13zM1 8.500h14M2 8l7-6v6M11 3h3M11 6h3M7 13v-3h2v3M13 10h-2v3h2",
  "M1.500 14.500v-13h13v13zM1 8.500h14M2 7l3-4 3 4 3-4M2 4l3 4 3-4M3 12h3M8 13v-3h2v3M13 10h-2v3h2",
  "M1.500 14.500v-13h13v13zM1 8.500h14M2 7l3-4 3 4 3-4M2 4l3 4 3-4M3 12h3M7 10.500h3M8.500 10v4M11 10v4M13 10v4",
];
const Instrument = ({ d }) => {
  const [solid, line] = d.startsWith("S ") ? d.slice(2).split("|") : ["", d];
  return (
    <svg width="16" height="16" viewBox="0 0 16 16" aria-hidden="true">
      <path d={solid} fill={G} /><path d={line} stroke={G} fill="none" />
    </svg>
  );
};
const Chevron = ({ r }) => (
  <svg width="9" height="9" viewBox="0 0 9 9" aria-hidden="true"><path d="M1 6l3.500-3.500L8 6" transform={`rotate(${r} 4.500 4.500)`} stroke="#505050" strokeWidth="2" fill="none" /></svg>
);

export default function App() {
  return (
    <Shell>
      <Global />
      <TitleBar>
        <AppMark size={16} />
        <AppTitle>设计1 - Multisim - [设计1 *]</AppTitle>
        <CaptionButton aria-label="最小化"><svg width="10" height="10"><path d="M0 5.500h10" stroke="#888" /></svg></CaptionButton>
        <CaptionButton aria-label="还原"><svg width="10" height="10"><path d="M.5 2.500h7v7h-7zM2.500 2.500v-2h7v7h-2" stroke="#888" fill="none" /></svg></CaptionButton>
        <CaptionButton aria-label="关闭"><svg width="10" height="10"><path d="M0 0l10 10M10 0L0 10" stroke="#888" /></svg></CaptionButton>
      </TitleBar>
      <Capture />
      <MenuBar>
        <Glyph name="doc" size={16} />
        <Menus>{MENUS.map(([t, k]) => <MenuItem key={t}>{t}(<u>{k}</u>)</MenuItem>)}</Menus>
        <ClassicButton aria-label="最小化"><svg width="9" height="9"><path d="M0 7.500h7" stroke="#000" strokeWidth="2" /></svg></ClassicButton>
        <ClassicButton aria-label="还原"><svg width="9" height="9"><path d="M.5 3.500h5.500v5h-5.500zM3 3v-2.500h5.500v5h-2.500M0 4h6M3 1h6" stroke="#000" fill="none" /></svg></ClassicButton>
        <ClassicButton aria-label="关闭"><svg width="9" height="9"><path d="M1 1l7 7M8 1l-7 7" stroke="#000" strokeWidth="2" /></svg></ClassicButton>
      </MenuBar>
      <ToolRow>
        <ToolGroup>{tools(["fresh", "open", "openBlue", "save", "|", "print", "preview", "|", "cut", "copyOff", "paste", "|", "undo", "redo"])}</ToolGroup>
        <ToolGroup $gap={42}>
          {tools(["explorer", "sheet", "netlist"])}
          <Tool $w={26} $pressed aria-label="grapher"><Glyph name="grapher" /></Tool>
          {tools(["post", "tree", "|", "comp", "db"])}
          <Picker>
            <InUse aria-label="在用列表"><option>--- 在用列表 ---</option></InUse>
            <svg width="9" height="6"><path d="M.5.500l4 4.500 4-4.500" stroke="#555" fill="none" /></svg>
          </Picker>
          {tools(["|", "erc", "annot"])}
          <Drop aria-label="正向注解" />
          {tools(["backOff", "fwd"])}
          <Drop aria-label="转移" />
          {tools(["|", "find", "help"])}
        </ToolGroup>
        <ToolGroup>{tools(["pv", "pa", "pw", "pdv", "pav", "pref", "pdig", "gear"])}</ToolGroup>
        <Spacer />
        <ToolGroup>{tools(["zin", "zout", "zarea", "zfit", "full"])}</ToolGroup>
        <RunGroup>
          <Tool $pressed aria-label="运行"><Glyph name="play" /></Tool>
          {tools(["pause", "stop", "wrench"])}
          <Mode>Interactive</Mode>
        </RunGroup>
      </ToolRow>
      <Work>
        <Side>
          <Palette $top={10}>
            {PALETTE.map((d, i) => (
              <PaletteButton key={i} aria-label={PALETTE_NAMES[i]}>{d ? <Outline d={d} /> : "MISC"}</PaletteButton>
            ))}
            <PaletteSep />
            <PaletteButton aria-label="MCU"><Outline d="F M5 6h6v9h-6zM3 7h10v1h-10zM3 9h10v1h-10zM3 11h10v1h-10zM3 13h10v1h-10zM2 1h2v3h-2zM5 1h2v3h-2zM8 1h2v3h-2zM12 1h1v3h-1z" /></PaletteButton>
            <PaletteSep />
            <PaletteButton aria-label="层次块"><Outline d="M2.500 2.500h5v4h-5zM9.500 9.500h5v4h-5zM4.500 7v5h5M8 4h5v5" /></PaletteButton>
            <PaletteButton aria-label="总线"><Outline d="M3 13.500h5v-10h5M3 12.500h4v-10h6" /></PaletteButton>
          </Palette>
        </Side>
        <Center>
          <Mdi>
            <Frame>
              <Canvas>
                <Schematic />
                <Grapher />
                <BodePlotter />
              </Canvas>
              <Bar $v>
                <Arrow $v aria-label="向上"><Chevron r={0} /></Arrow>
                <Thumb $size={177} /><Thumb $size={491} $solid /><Thumb $size={184} />
                <Arrow $v aria-label="向下"><Chevron r={180} /></Arrow>
              </Bar>
              <Bar>
                <Arrow aria-label="向左"><Chevron r={-90} /></Arrow>
                <Thumb $size={1512} $solid /><Thumb $size={293} />
                <Arrow aria-label="向右"><Chevron r={90} /></Arrow>
              </Bar>
              <Bar />
            </Frame>
          </Mdi>
          <DocTabs>
            <DocTab><Glyph name="doc" />设计1 *</DocTab>
            <Spacer />
            <Tool aria-label="层叠"><Glyph name="cascade" size={13} /></Tool>
          </DocTabs>
        </Center>
        <Side>
          <Palette $top={11}>
            {INSTRUMENTS.map((d, i) => <PaletteButton key={i} aria-label={`仪器 ${i + 1}`}><Instrument d={d} /></PaletteButton>)}
            <PaletteSep />
            <PaletteButton aria-label="LabVIEW"><Outline d="F M2 2h12v12h-12zM1 4h14v1h-14zM1 7h14v1h-14zM1 10h14v1h-14zM4 1h1v14h-1zM7 1h1v14h-1zM10 1h1v14h-1z" /></PaletteButton>
            <PaletteArrow />
            <PaletteSep />
            <PaletteButton aria-label="ELVIS"><Outline d="M1 7l5 6 4-3M3 5l5 5 5-6 2 2-5 6M9 3l3 3" /></PaletteButton>
            <PaletteArrow />
            <PaletteSep />
            <PaletteButton aria-label="电流探针"><Outline d="M1.500 10.500a3 3 0 1 0 6 0a3 3 0 1 0-6 0M2.500 10.500a2 2 0 1 0 4 0a2 2 0 1 0-4 0M6 8l4-5h1v-2M7 9l4-5h4v-2M8 10.500h7" /></PaletteButton>
          </Palette>
        </Side>
      </Work>
      <Status>
        <Dash>-</Dash>
        <StatusCell $w={124}>设计1: 正在仿真...</StatusCell>
        <StatusCell $w={187}>传递</StatusCell>
      </Status>
      <Taskbar>
        <Task aria-label="开始"><svg width="16" height="16"><path d="M0 2.300l6.500-.9v6.200H0zM7.500 1.200L16 0v7.600H7.500zM0 8.500h6.500v6.200L0 13.800zM7.500 8.500H16V16l-8.500-1.200z" fill="#fff" /></svg></Task>
        <Task $w={52} aria-label="文件资源管理器">
          <svg width="22" height="20"><path d="M0 1h8l2 3h12v14H0z" fill="#f5b82e" /><path d="M0 5h22v13H0z" fill="#ffd768" /><path d="M4 18v-6q0-2 2-2h10q2 0 2 2v6h-4v-3H8v3z" fill="#3f9be0" /></svg>
        </Task>
        <Task $on $run $w={48} aria-label="Multisim"><AppMark size={22} /></Task>
        <Task $run $w={40} $gap={5} aria-label="WPS">
          <svg width="24" height="24"><rect width="24" height="24" rx="3" fill="#2a7cf5" /><path d="M3.500 8h3.500l2 8h1l3-8h1.500l1 8h1l3-8.500M8.500 8h6" stroke="#fff" strokeWidth="1.800" fill="none" /></svg>
        </Task>
        <Tray>
          <TrayItem $w={76} aria-label="显示隐藏的图标"><svg width="14" height="8"><path d="M1 7l6-6 6 6" stroke="#fff" strokeWidth="1.300" fill="none" /></svg></TrayItem>
          <TrayItem $w={20} aria-label="网络">
            <svg width="18" height="18" fill="none" stroke="#fff" strokeWidth="1.200"><circle cx="8" cy="8" r="7" /><path d="M1 8h14M8 1v14M2.500 4h11M2.500 12h6M8 1c-5 4-5 10 0 14M8 1c4 3 4 6 4 8" /><circle cx="13.500" cy="13.500" r="3.500" fill="#1b2842" /><path d="M11.500 15.500l4-4" /></svg>
          </TrayItem>
          <TrayItem $w={28}>中</TrayItem>
          <TrayItem $w={28} aria-label="搜狗输入法"><svg width="16" height="16" viewBox="0 0 33 33"><SLogo /></svg></TrayItem>
          <Clock>20:54<br />2025/12/17</Clock>
          <TrayItem $w={32} aria-label="通知"><svg width="18" height="18"><path d="M1 2h16v11h-6l-2 3-2-3H1z" stroke="#fff" strokeWidth="1.300" fill="none" /></svg></TrayItem>
          <Peek />
        </Tray>
      </Taskbar>
      <Watermark>小红书</Watermark>
      <Ime>
        <ImeLogo width="33" height="33"><SLogo /></ImeLogo>
        <ImeKey>中</ImeKey>
        <ImeKey>°,</ImeKey>
        <ImeKey aria-label="语音"><svg width="12" height="16"><rect x="3" width="6" height="10" rx="3" fill="#1272d4" /><path d="M1 6c0 8 10 8 10 0M6 12v4" stroke="#1272d4" strokeWidth="1.500" fill="none" /></svg></ImeKey>
        <ImeKey aria-label="键盘"><svg width="15" height="12"><rect width="15" height="12" rx="2" fill="#1272d4" /><path d="M2 3.500h11M2 6h11M4 9h7" stroke="#fff" strokeWidth="1.500" strokeDasharray="1.500 1" /></svg></ImeKey>
        <ImeKey aria-label="皮肤"><svg width="16" height="14"><path d="M4 0l4 2 4-2 4 3-2 4-2-1v8H4V6L2 7 0 3z" fill="#1272d4" /></svg></ImeKey>
        <ImeKey $soft aria-label="工具箱"><svg width="14" height="14"><rect width="6" height="6" rx="2" fill="#5a7be8" /><rect x="8" width="6" height="6" rx="3" fill="#7b6be0" /><rect y="8" width="6" height="6" rx="2" fill="#e07a90" /><rect x="8" y="8" width="6" height="6" rx="2" fill="#6a68e0" /></svg></ImeKey>
      </Ime>
    </Shell>
  );
}
